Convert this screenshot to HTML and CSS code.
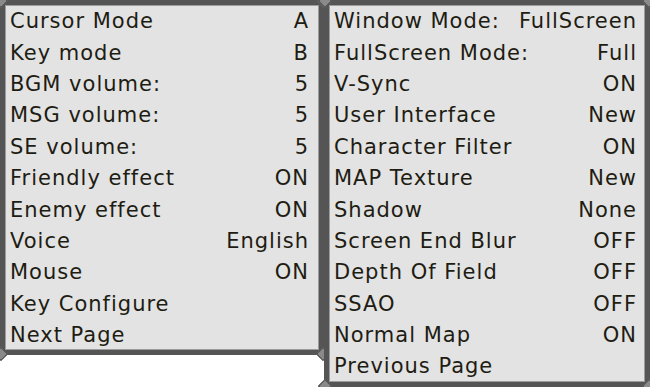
FILE: index.html
```html
<!DOCTYPE html>
<html>
<head>
<meta charset="utf-8">
<link rel="stylesheet" href="styles.css">
</head>
<body>
<div class="screen">
  <div class="panel panel-left">
    <div class="row"><span>Cursor Mode</span><span>A</span></div>
    <div class="row"><span>Key mode</span><span>B</span></div>
    <div class="row"><span>BGM volume:</span><span>5</span></div>
    <div class="row"><span>MSG volume:</span><span>5</span></div>
    <div class="row"><span>SE volume:</span><span>5</span></div>
    <div class="row"><span>Friendly effect</span><span>ON</span></div>
    <div class="row"><span>Enemy effect</span><span>ON</span></div>
    <div class="row"><span>Voice</span><span>English</span></div>
    <div class="row"><span>Mouse</span><span>ON</span></div>
    <div class="row"><span>Key Configure</span></div>
    <div class="row"><span>Next Page</span></div>
    <i class="corner tl"></i><i class="corner tr"></i><i class="corner bl"></i><i class="corner br"></i>
  </div>
  <div class="panel panel-right">
    <div class="row"><span>Window Mode:</span><span>FullScreen</span></div>
    <div class="row"><span>FullScreen Mode:</span><span>Full</span></div>
    <div class="row"><span>V-Sync</span><span>ON</span></div>
    <div class="row"><span>User Interface</span><span>New</span></div>
    <div class="row"><span>Character Filter</span><span>ON</span></div>
    <div class="row"><span>MAP Texture</span><span>New</span></div>
    <div class="row"><span>Shadow</span><span>None</span></div>
    <div class="row"><span>Screen End Blur</span><span>OFF</span></div>
    <div class="row"><span>Depth Of Field</span><span>OFF</span></div>
    <div class="row"><span>SSAO</span><span>OFF</span></div>
    <div class="row"><span>Normal Map</span><span>ON</span></div>
    <div class="row"><span>Previous Page</span></div>
    <i class="corner tl"></i><i class="corner tr"></i><i class="corner bl"></i><i class="corner br"></i>
  </div>
</div>
</body>
</html>
```
FILE: styles.css
```css
html, body {
  margin: 0;
  padding: 0;
  background: #ffffff;
}
.screen {
  display: flex;
  align-items: flex-start;
  width: 650px;
  height: 387px;
}
.panel {
  position: relative;
  box-sizing: border-box;
  background: #e3e3e3;
  border: 5px solid #555555;
  box-shadow: inset 0 0 0 1px #9c9c9c;
  font-family: "DejaVu Sans", sans-serif;
  font-size: 21px;
  letter-spacing: 1px;
  color: #211c12;
  display: flex;
  flex-direction: column;
  padding-top: 1px;
}
.panel-left {
  width: 324px;
  height: 355px;
  padding-left: 5px;
  padding-right: 10px;
}
.panel-right {
  width: 326px;
  height: 387px;
  padding-left: 5px;
  padding-right: 8px;
}
.row {
  height: 31.4px;
  flex: none;
  display: flex;
  justify-content: space-between;
  align-items: center;
  white-space: nowrap;
  line-height: 1;
}
.corner {
  position: absolute;
  width: 8px;
  height: 8px;
  background: #8a8a8a;
  border: 1px solid #4a4a4a;
  transform: rotate(45deg);
}
.corner.tl { left: -9px; top: -9px; }
.corner.tr { right: -9px; top: -9px; }
.corner.bl { left: -9px; bottom: -9px; }
.corner.br { right: -9px; bottom: -9px; }
```
